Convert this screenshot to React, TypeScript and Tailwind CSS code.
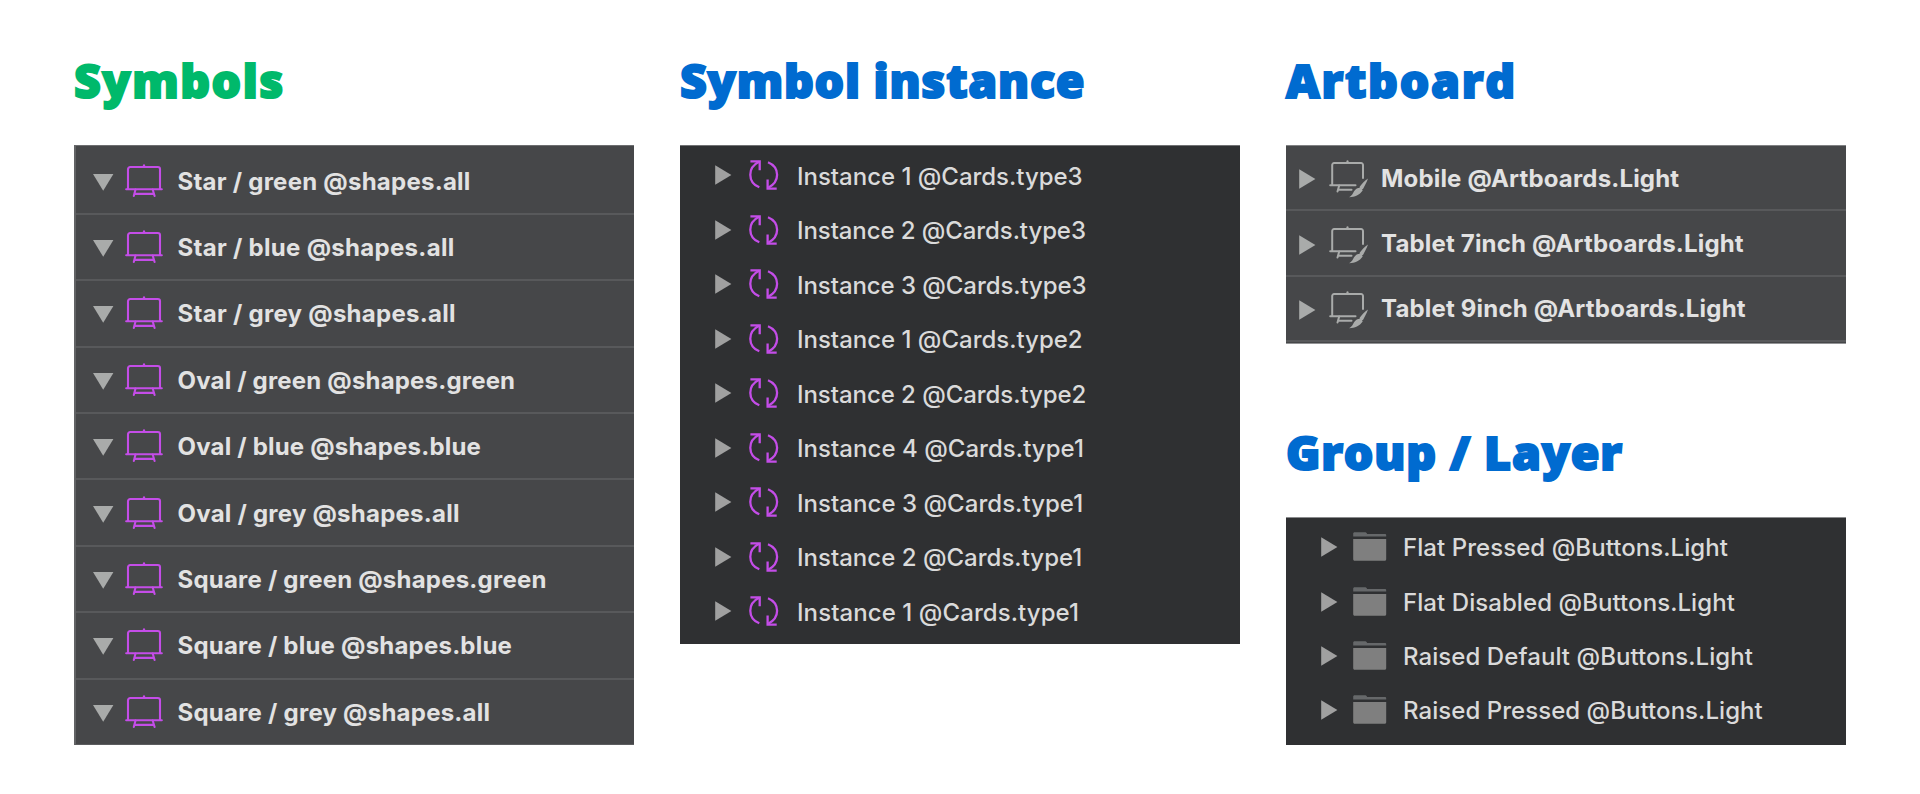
type Row = { label: string; tracking: string };

const symbols: Row[] = [
  { label: "Star / green @shapes.all", tracking: "tracking-[0.25px]" },
  { label: "Star / blue @shapes.all", tracking: "tracking-[0.3px]" },
  { label: "Star / grey @shapes.all", tracking: "tracking-[0.28px]" },
  { label: "Oval / green @shapes.green", tracking: "tracking-[0.19px]" },
  { label: "Oval / blue @shapes.blue", tracking: "tracking-[0.2px]" },
  { label: "Oval / grey @shapes.all", tracking: "tracking-[0.24px]" },
  { label: "Square / green @shapes.green", tracking: "tracking-[0.22px]" },
  { label: "Square / blue @shapes.blue", tracking: "tracking-[0.22px]" },
  { label: "Square / grey @shapes.all", tracking: "tracking-[0.24px]" },
];

const instances: Row[] = [
  { label: "Instance 1 @Cards.type3", tracking: "tracking-[-0.02px]" },
  { label: "Instance 2 @Cards.type3", tracking: "tracking-[-0.09px]" },
  { label: "Instance 3 @Cards.type3", tracking: "tracking-[-0.07px]" },
  { label: "Instance 1 @Cards.type2", tracking: "tracking-[-0.01px]" },
  { label: "Instance 2 @Cards.type2", tracking: "tracking-[-0.06px]" },
  { label: "Instance 4 @Cards.type1", tracking: "tracking-[0.04px]" },
  { label: "Instance 3 @Cards.type1", tracking: "tracking-[0.04px]" },
  { label: "Instance 2 @Cards.type1", tracking: "tracking-[0.01px]" },
  { label: "Instance 1 @Cards.type1", tracking: "tracking-[0.08px]" },
];

const artboards: Row[] = [
  { label: "Mobile @Artboards.Light", tracking: "tracking-[0.17px]" },
  { label: "Tablet 7inch @Artboards.Light", tracking: "tracking-[0.17px]" },
  { label: "Tablet 9inch @Artboards.Light", tracking: "tracking-[0.18px]" },
];

const layers: Row[] = [
  { label: "Flat Pressed @Buttons.Light", tracking: "tracking-[0.06px]" },
  { label: "Flat Disabled @Buttons.Light", tracking: "tracking-[0.07px]" },
  { label: "Raised Default @Buttons.Light", tracking: "tracking-[0.07px]" },
  { label: "Raised Pressed @Buttons.Light", tracking: "tracking-[0.05px]" },
];

function Heading({ text, className }: { text: string; className: string }) {
  return (
    <h2
      className={`h-[72px] whitespace-nowrap font-['Open_Sans',sans-serif] text-[46.5px] leading-[70px] font-extrabold [-webkit-text-stroke:2px_currentColor] ${className}`}
    >
      {text}
    </h2>
  );
}

function ArrowDown() {
  return (
    <svg width="21" height="20" viewBox="0 0 21 20" className="shrink-0">
      <path d="M0 3h20.4L10.2 19.8z" fill="#a9abaa" />
    </svg>
  );
}

function ArrowRight({ className }: { className: string }) {
  return (
    <svg width="17" height="20" viewBox="0 0 17 20" className={`shrink-0 ${className}`}>
      <path d="M.2.3 16.4 10 .2 19.7z" fill="currentColor" />
    </svg>
  );
}

function SymbolIcon() {
  return (
    <svg
      width="38"
      height="34"
      viewBox="0 0 38 34"
      fill="none"
      stroke="#c44de8"
      strokeWidth="2.1"
      strokeLinecap="round"
      strokeLinejoin="round"
      className="shrink-0"
    >
      <path d="M3 25V5.200a2.200 2.200 0 0 1 2.200-2.200h27.600a2.200 2.200 0 0 1 2.200 2.200V25" />
      <path d="M19 3V1.200" />
      <path d="M1.200 25.200h35.600" />
      <path d="M10.500 25.500 8.800 32M27.700 25.500l1.900 6.500M9.600 29.900h18.800" />
    </svg>
  );
}

function InstanceIcon() {
  return (
    <svg
      width="30"
      height="30"
      viewBox="0 0 30 30"
      fill="none"
      stroke="#c44de8"
      strokeWidth="2.3"
      className="shrink-0"
    >
      <path d="M10.300 27.300C4.200 24.800 1.300 20 1.300 14.700 1.300 9.300 4.500 4.600 10 1.800" />
      <path d="M1.400 1.300h9.300v9" />
      <path d="M19 2.200c6 2.500 9.100 7.300 9.100 12.600 0 5.400-3.300 10.100-8.800 12.900" />
      <path d="M27.700 28.600h-9.100v-9" />
    </svg>
  );
}

function ArtboardIcon() {
  return (
    <svg
      width="40"
      height="38"
      viewBox="0 0 40 38"
      fill="none"
      stroke="#a9abaa"
      strokeWidth="2"
      strokeLinecap="round"
      strokeLinejoin="round"
      className="shrink-0"
    >
      <path d="M3.200 24.600V5a1.900 1.900 0 0 1 1.900-1.900h27a1.900 1.900 0 0 1 1.900 1.900v13" />
      <path d="M18.500 3V1.200" />
      <path d="M1.200 25.200h25.300" />
      <path d="M10.200 25.500 8.500 31.600M9.300 29.700h13.200" />
      <path
        d="M39 18.600c-1.500 4-3.200 7.500-5 10.400l-1 .2.700 1.300c-3.200 4.600-7.600 6.600-13.700 6.700 1.800-1 3-2.300 4.100-4.300 1.300-2.300 2.400-4.100 5-4.900l1.400.1.200-1.300c2.300-3.200 5-6 8.300-8.200z"
        fill="#a9abaa"
        stroke="none"
      />
    </svg>
  );
}

function FolderIcon() {
  return (
    <svg width="34" height="30" viewBox="0 0 34 30" className="shrink-0">
      <path d="M.2 4.600V1.700C.2.700.8.200 1.700.200h10.200c.9 0 1.300.3 1.700.9l.6.900h17.600c.9 0 1.400.5 1.400 1.400v1.200z" fill="#66686a" />
      <path d="M.2 7h33v20.300c0 .9-.6 1.500-1.500 1.500h-30c-.9 0-1.500-.6-1.500-1.500z" fill="#7f7f7f" />
    </svg>
  );
}

export default function App() {
  return (
    <main className="flex h-[794px] w-[1920px] items-start gap-[46px] bg-white pt-[45px] pl-[74px] font-[Inter,sans-serif] text-2xl">
      <section className="w-[560px]">
        <Heading text="Symbols" className="tracking-[1.5px] text-[#00b96b]" />
        <ul className="mt-7 h-[600px] border-t border-b border-l-2 border-t-[#6d6e70] border-b-[#5c5d5f] border-l-[#626365] bg-[#464749] pt-[2.4px] font-bold text-[#e2e2e2]">
          {symbols.map((row, i) => (
            <li
              key={row.label}
              className={`flex h-[66.4px] items-center border-b-2 pl-[16.5px] ${i < 8 ? "border-[#58595b]" : "border-transparent"}`}
            >
              <ArrowDown />
              <span className="ml-[11px] flex">
                <SymbolIcon />
              </span>
              <span className={`mt-0.5 ml-[15px] whitespace-nowrap ${row.tracking}`}>{row.label}</span>
            </li>
          ))}
        </ul>
      </section>

      <section className="w-[560px]">
        <Heading text="Symbol instance" className="tracking-[0.75px] text-[#006bd0]" />
        <ul className="mt-7 h-[499px] border-t border-[#707173] bg-[#2f3032] pt-0.5 font-medium text-[#dadada]">
          {instances.map((row) => (
            <li key={row.label} className="flex h-[54.5px] items-center pl-[35px]">
              <ArrowRight className="text-[#a0a0a0]" />
              <span className="ml-[17px] flex">
                <InstanceIcon />
              </span>
              <span className={`mt-[3px] ml-[18px] whitespace-nowrap ${row.tracking}`}>{row.label}</span>
            </li>
          ))}
        </ul>
      </section>

      <section className="w-[560px]">
        <Heading text="Artboard" className="tracking-[1.7px] text-[#006bd0]" />
        <ul className="mt-7 h-[199px] border-t border-b border-t-[#808183] border-b-[#939496] bg-[#464749] font-bold text-[#e2e2e2]">
          {artboards.map((row) => (
            <li key={row.label} className="flex h-[65.4px] items-center border-b-2 border-[#58595b] pt-[3px] pl-[13px]">
              <ArrowRight className="text-[#a9abaa]" />
              <span className="ml-[13px] flex">
                <ArtboardIcon />
              </span>
              <span className={`-mt-px ml-[12px] whitespace-nowrap ${row.tracking}`}>{row.label}</span>
            </li>
          ))}
        </ul>

        <Heading text="Group / Layer" className="mt-[73px] tracking-[0.8px] text-[#006bd0]" />
        <ul className="mt-7 h-[228px] border-t border-[#8a8b8d] bg-[#2f3032] pt-0.5 font-medium text-[#dadada]">
          {layers.map((row) => (
            <li key={row.label} className="flex h-[54.4px] items-center pl-[35px]">
              <ArrowRight className="text-[#a0a0a0]" />
              <span className="ml-[15px] flex">
                <FolderIcon />
              </span>
              <span className={`mt-0.5 ml-[16px] whitespace-nowrap ${row.tracking}`}>{row.label}</span>
            </li>
          ))}
        </ul>
      </section>
    </main>
  );
}
